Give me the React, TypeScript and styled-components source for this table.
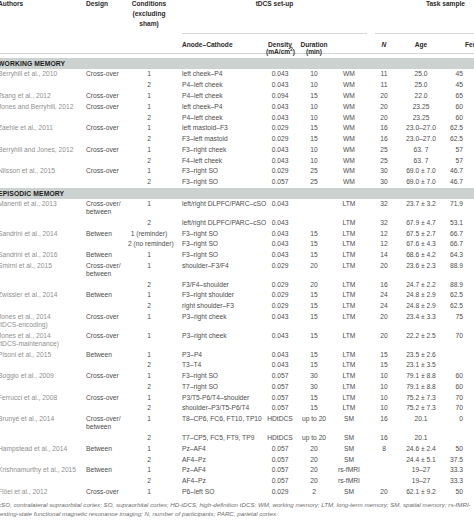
import React from 'react';
import styled, { createGlobalStyle } from 'styled-components';

const GlobalStyle = createGlobalStyle`
  html, body {
    margin: 0;
    padding: 0;
    background: #fff;
    overflow: hidden;
  }
  body {
    font-family: "Liberation Sans", Arial, Helvetica, sans-serif;
  }
`;

// ширины колонок, первая начинается на -2px (картинка обрезана слева)
const GRID = '88px 42px 42px 96px 28px 40px 30px 40px 34px 42px';

type Align = 'left' | 'center' | 'right';
const ALIGN: Align[] = ['left', 'left', 'center', 'left', 'center', 'center', 'center', 'center', 'center', 'right'];

const Page = styled.div`
  width: 482px;
  margin-left: -2px;
`;

const Head = styled.div`
  border-bottom: 1.5px solid #d6d6d6;
  margin-bottom: 4px;
`;

const HeadRow = styled.div<{ $h: number }>`
  display: grid;
  grid-template-columns: ${GRID};
  height: ${p => p.$h}px;
`;

const HeadCell = styled.div<{ $align?: Align; $pl?: number; $pt?: number; $italic?: boolean; $span?: string }>`
  ${p => p.$span && `grid-column: ${p.$span};`}
  padding: ${p => p.$pt ?? 0}px 0 0 ${p => p.$pl ?? 0}px;
  text-align: ${p => p.$align ?? 'left'};
  font-size: 6.6px;
  line-height: 7.4px;
  font-weight: 700;
  font-style: ${p => (p.$italic ? 'italic' : 'normal')};
  color: #2a2a2a;
  white-space: pre;
`;

const TopText = styled.div`
  line-height: 10px;
  margin-top: -1px;
`;

const GroupLabel = styled.div<{ $pl: number; $align: Align; $pr?: number }>`
  height: 35px;
  box-sizing: border-box;
  margin-left: ${p => p.$pl}px;
  margin-right: -3px;
  padding-right: ${p => p.$pr ?? 0}px;
  border-bottom: 1.5px solid #d6d6d6;
  text-align: ${p => p.$align};
`;

const Sup = styled.sup`
  font-size: 4.5px;
  line-height: 0;
`;

const SectionBar = styled.div`
  height: 11px;
  background: #ccd2d0;
  font-size: 6.8px;
  line-height: 11px;
  font-weight: 700;
  color: #1c1c1c;
  letter-spacing: 0.1px;
  white-space: nowrap;
`;

const Row = styled.div`
  display: grid;
  grid-template-columns: ${GRID};
  padding: 1.4px 0;
`;

const Cell = styled.div<{ $align: Align; $muted?: boolean; $pl?: number; $pr?: number }>`
  padding: 0 ${p => p.$pr ?? 0}px 0 ${p => p.$pl ?? 0}px;
  text-align: ${p => p.$align};
  font-size: 6.7px;
  line-height: 8px;
  color: ${p => (p.$muted ? '#909090' : '#4d4d4d')};
  white-space: pre;
`;

const Footnote = styled.p`
  margin: 3px 0 0;
  font-size: 6.2px;
  line-height: 9px;
  font-style: italic;
  color: #6d6d6d;
  white-space: nowrap;
`;

type RowData = string[];

const sections: { title: string; rows: RowData[] }[] = [
  {
    title: 'WORKING MEMORY',
    rows: [
      ['Berryhill et al., 2010', 'Cross-over', '1', 'left cheek–P4', '0.043', '10', 'WM', '11', '25.0', '45'],
      ['', '', '2', 'P4–left cheek', '0.043', '10', 'WM', '11', '25.0', '45'],
      ['Tsang et al., 2012', 'Cross-over', '1', 'P4–left cheek', '0.094', '15', 'WM', '20', '22.0', '65'],
      ['Jones and Berryhill, 2012', 'Cross-over', '1', 'left cheek–P4', '0.043', '10', 'WM', '20', '23.25', '60'],
      ['', '', '2', 'P4–left cheek', '0.043', '10', 'WM', '20', '23.25', '60'],
      ['Zaehle et al., 2011', 'Cross-over', '1', 'left mastoid–F3', '0.029', '15', 'WM', '16', '23.0–27.0', '62.5'],
      ['', '', '2', 'F3–left mastoid', '0.029', '15', 'WM', '16', '23.0–27.0', '62.5'],
      ['Berryhill and Jones, 2012', 'Cross-over', '1', 'F3–right cheek', '0.043', '10', 'WM', '25', '63. 7', '57'],
      ['', '', '2', 'F4–left cheek', '0.043', '10', 'WM', '25', '63. 7', '57'],
      ['Nilsson et al., 2015', 'Cross-over', '1', 'F3–right SO', '0.029', '25', 'WM', '30', '69.0 ± 7.0', '46.7'],
      ['', '', '2', 'F3–right SO', '0.057', '25', 'WM', '30', '69.0 ± 7.0', '46.7'],
    ],
  },
  {
    title: 'EPISODIC MEMORY',
    rows: [
      ['Manenti et al., 2013', 'Cross-over/\nbetween', '1', 'left/right DLPFC/PARC–cSO', '0.043', '', 'LTM', '32', '23.7 ± 3.2', '71.9'],
      ['', '', '2', 'left/right DLPFC/PARC–cSO', '0.043', '', 'LTM', '32', '67.9 ± 4.7', '53.1'],
      ['Sandrini et al., 2014', 'Between', '1 (reminder)', 'F3–right SO', '0.043', '15', 'LTM', '12', '67.5 ± 2.7', '66.7'],
      ['', '', '2 (no reminder)', 'F3–right SO', '0.043', '15', 'LTM', '12', '67.6 ± 4.3', '66.7'],
      ['Sandrini et al., 2016', 'Between', '1', 'F3–right SO', '0.043', '15', 'LTM', '14', '68.6 ± 4.2', '64.3'],
      ['Smirni et al., 2015', 'Cross-over/\nbetween', '1', 'shoulder–F3/F4', '0.029', '20', 'LTM', '20', '23.6 ± 2.3', '88.9'],
      ['', '', '2', 'F3/F4–shoulder', '0.029', '20', 'LTM', '16', '24.7 ± 2.2', '88.9'],
      ['Zwissler et al., 2014', 'Between', '1', 'F3–right shoulder', '0.029', '15', 'LTM', '24', '24.8 ± 2.9', '62.5'],
      ['', '', '2', 'right shoulder–F3', '0.029', '15', 'LTM', '24', '24.8 ± 2.9', '62.5'],
      ['Jones et al., 2014\n(tDCS-encoding)', 'Cross-over', '1', 'P3–right cheek', '0.043', '15', 'LTM', '20', '23.4 ± 3.3', '75'],
      ['Jones et al., 2014\n(tDCS-maintenance)', 'Cross-over', '1', 'P3–right cheek', '0.043', '15', 'LTM', '20', '22.2 ± 2.5', '70'],
      ['Pisoni et al., 2015', 'Between', '1', 'P3–P4', '0.043', '15', 'LTM', '15', '23.5 ± 2.6', ''],
      ['', '', '2', 'T3–T4', '0.043', '15', 'LTM', '15', '23.1 ± 3.5', ''],
      ['Boggio et al., 2009', 'Cross-over', '1', 'F3–right SO', '0.057', '30', 'LTM', '10', '79.1 ± 8.8', '60'],
      ['', '', '2', 'T7–right SO', '0.057', '30', 'LTM', '10', '79.1 ± 8.8', '60'],
      ['Ferrucci et al., 2008', 'Cross-over', '1', 'P3/T5-P6/T4–shoulder', '0.057', '15', 'LTM', '10', '75.2 ± 7.3', '70'],
      ['', '', '2', 'shoulder–P3/T5-P6/T4', '0.057', '15', 'LTM', '10', '75.2 ± 7.3', '70'],
      ['Brunyé et al., 2014', 'Cross-over/\nbetween', '1', 'T8–CP6, FC6, FT10, TP10', 'HDtDCS', 'up to 20', 'SM', '16', '20.1', '0'],
      ['', '', '2', 'T7–CP5, FC5, FT9, TP9', 'HDtDCS', 'up to 20', 'SM', '16', '20.1', ''],
      ['Hampstead et al., 2014', 'Between', '1', 'Pz–AF4', '0.057', '20', 'SM', '8', '24.6 ± 2.4', '50'],
      ['', '', '2', 'AF4–Pz', '0.057', '20', 'SM', '', '24.4 ± 5.1', '37.5'],
      ['Krishnamurthy et al., 2015', 'Between', '1', 'Pz–AF4', '0.057', '20', 'rs-fMRI', '', '19–27', '33.3'],
      ['', '', '2', 'AF4–Pz', '0.057', '20', 'rs-fMRI', '', '19–27', '33.3'],
      ['Flöel et al., 2012', 'Cross-over', '1', 'P6–left SO', '0.029', '2', 'SM', '20', '62.1 ± 9.2', '50'],
    ],
  },
];

const DataRow: React.FC<{ row: RowData }> = ({ row }) => (
  <Row>
    {row.map((v, i) => (
      <Cell
        key={i}
        $align={ALIGN[i]}
        $muted={i === 0}
        $pl={i === 3 ? 12 : 0}
        $pr={i === 9 ? 17 : 0}
      >
        {v}
      </Cell>
    ))}
  </Row>
);

export default function App() {
  return (
    <>
      <GlobalStyle />
      <Page>
        <Head>
          <HeadRow $h={37}>
            <HeadCell><TopText>Authors</TopText></HeadCell>
            <HeadCell><TopText>Design</TopText></HeadCell>
            <HeadCell $align="center"><TopText>{'Conditions\n(excluding\nsham)'}</TopText></HeadCell>
            <HeadCell $span="4 / 8">
              <GroupLabel $pl={12} $align="center"><TopText>tDCS set-up</TopText></GroupLabel>
            </HeadCell>
            <HeadCell $span="8 / 11">
              <GroupLabel $pl={11} $align="right" $pr={18}><TopText>Task sample</TopText></GroupLabel>
            </HeadCell>
          </HeadRow>
          <HeadRow $h={16}>
            <HeadCell />
            <HeadCell />
            <HeadCell />
            <HeadCell $pl={12} $pt={4}>Anode–Cathode</HeadCell>
            <HeadCell $align="center" $pt={4}>
              Density{'\n'}(mA/cm<Sup>2</Sup>)
            </HeadCell>
            <HeadCell $align="center" $pt={4}>{'Duration\n(min)'}</HeadCell>
            <HeadCell />
            <HeadCell $align="center" $italic $pt={4}>N</HeadCell>
            <HeadCell $align="center" $pt={4}>Age</HeadCell>
            <HeadCell $pl={27} $pt={4}>Female%</HeadCell>
          </HeadRow>
        </Head>
        {sections.map(s => (
          <section key={s.title}>
            <SectionBar>{s.title}</SectionBar>
            {s.rows.map((r, i) => (
              <DataRow key={i} row={r} />
            ))}
          </section>
        ))}
        <Footnote>
          cSO, contralateral supraorbital cortex; SO, supraorbital cortex; HD-tDCS, high-definition tDCS; WM, working memory; LTM, long-term memory; SM, spatial memory; rs-fMRI-
          <br />
          resting-state functional magnetic resonance imaging; N, number of participants; PARC, parietal cortex.
        </Footnote>
      </Page>
    </>
  );
}
